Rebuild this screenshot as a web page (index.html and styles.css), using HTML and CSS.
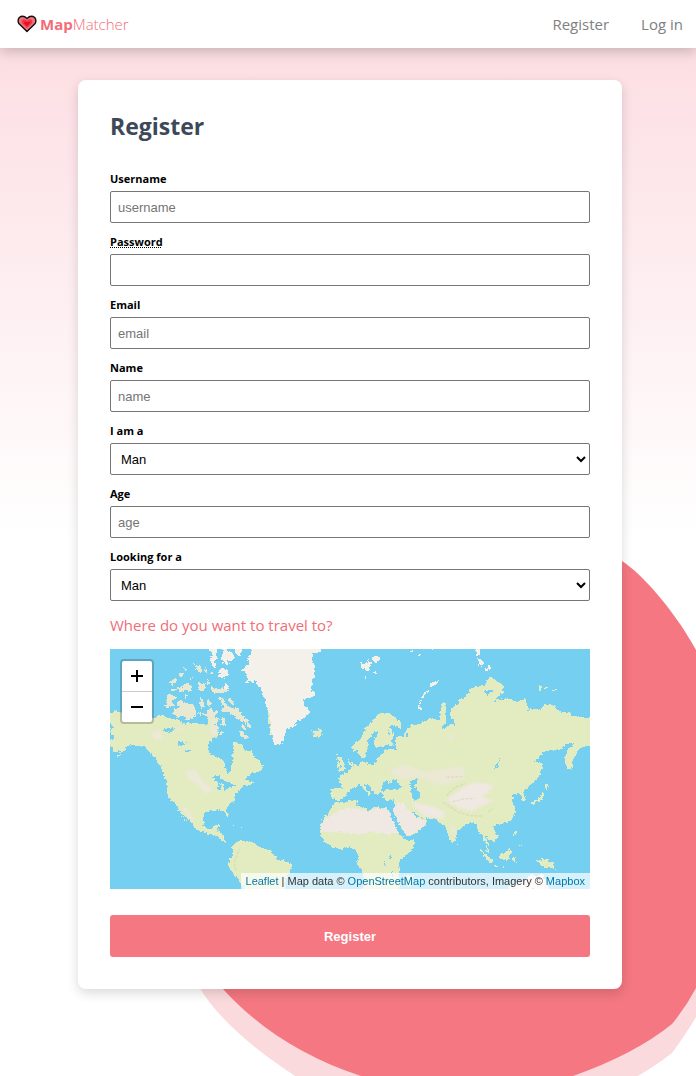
FILE: index.html
```html
<!DOCTYPE html>
<html lang="en">
<head>
<meta charset="utf-8">
<meta name="viewport" content="width=device-width, initial-scale=1">
<title>MapMatcher</title>
<link rel="stylesheet" href="styles.css">
</head>
<body>
<svg class="blob" viewBox="0 0 516 530" aria-hidden="true">
  <path class="blob-pale" d="M14 430C26 460 60 490 85 509Q100 520 115 530H458Q478 518 492 507Q506 488 516 471V200H14Z"/>
  <path class="blob-main" d="M442 15C463 29 487 58 504 84Q511 95 516 104V442Q506 461 492 478Q455 508 393 530H181C125 512 76 480 43 443L20 410V15Z"/>
</svg>
<header class="navbar">
  <a class="brand" href="#">
    <svg class="brand-heart" viewBox="0 0 20 18" aria-hidden="true">
      <path d="M10 16.5 1.8 8.5Q.2 5 2.3 2.5Q6 -.2 10 3.4Q14 -.2 17.7 2.5Q19.8 5 18.2 8.5Z" fill="#f0717b" stroke="#111" stroke-width="1.4" stroke-linejoin="round"/>
      <path d="M10 13.2 4.8 8Q4.3 4.8 6.5 4.2Q8.6 4 10 5.8Q11.4 4 13.5 4.2Q15.7 4.8 15.2 8Z" fill="#ed3745"/>
      <path d="M10 11.2 6.9 8Q7.6 5.8 10 7.2Q12.4 5.8 13.1 8Z" fill="#e80c20"/>
    </svg>
    <span class="brand-name"><b>Map</b>Matcher</span>
  </a>
  <nav class="nav-links">
    <a href="#">Register</a>
    <a href="#">Log in</a>
  </nav>
</header>
<main class="page">
  <form class="card">
    <h1 class="title">Register</h1>
    <div class="field"><label for="username">Username</label><input id="username" type="text" placeholder="username"></div>
    <div class="field"><label for="password"><abbr class="hint">Password</abbr></label><input id="password" type="password"></div>
    <div class="field"><label for="email">Email</label><input id="email" type="email" placeholder="email"></div>
    <div class="field"><label for="name">Name</label><input id="name" type="text" placeholder="name"></div>
    <div class="field"><label for="gender">I am a</label><select id="gender"><option>Man</option><option>Woman</option></select></div>
    <div class="field"><label for="age">Age</label><input id="age" type="text" placeholder="age"></div>
    <div class="field"><label for="looking">Looking for a</label><select id="looking"><option>Man</option><option>Woman</option></select></div>
    <p class="question">Where do you want to travel to?</p>
    <div class="map">
      <svg class="map-art" viewBox="0 0 1440 720" preserveAspectRatio="xMidYMid slice" aria-hidden="true">
        <defs>
          <filter id="coast" x="0" y="0" width="100%" height="100%" filterUnits="userSpaceOnUse">
            <feTurbulence type="fractalNoise" baseFrequency=".12" numOctaves="2" seed="4"/>
            <feDisplacementMap in="SourceGraphic" scale="14" xChannelSelector="R" yChannelSelector="G"/>
          </filter>
          <filter id="soft" x="-20%" y="-20%" width="140%" height="140%"><feGaussianBlur stdDeviation="5"/></filter>
          <clipPath id="eurasia-clip"><path d="M810 360L795 377L784 397L780 417L765 430L740 443L725 447L722 430L695 415L662 413L662 451L685 450L697 440L710 422L735 415L755 420L770 400L790 412L792 443L803 440L815 425L818 445L855 451L854 470L840 480L870 530L888 570L945 530L952 513L967 506L1005 540L1023 583L1035 575L1040 545L1088 522L1150 575L1220 500L1205 430L1244 432L1295 370L1275 340L1440 250V205L1000 140L700 230L720 340Z"/></clipPath>
        </defs>
        <g filter="url(#coast)" shape-rendering="crispEdges">
          <g class="land">
            <path d="M-6 197L15 187L32 190L60 205L128 212L140 200L158 197L180 208L213 213L216 226L240 221L290 227L300 207L306 225L325 245L322 263L297 280L295 300L302 316L325 325L342 335L346 355L352 375L361 369L364 350L370 340L366 315L374 300L368 282L385 281L400 292L404 306L425 304L430 320L442 330L460 352L452 367L425 371L415 383L404 392L435 399L420 407L399 408L390 426L373 436L374 452L358 466L349 478L355 500L350 501L344 486L325 484L287 488L280 505L282 530L290 540L307 538L315 529L326 528L324 545L340 556L342 575L348 584L337 578L328 566L309 558L283 551L255 540L247 525L218 494L205 477L198 464L182 453L173 436L170 397L158 374L155 357L134 325L115 305L99 290L80 291L60 286L42 304L17 330L35 304L10 310L8 294L-6 286L4 272L14 264L0 252L4 238L18 236L-6 222Z"/>
            <path d="M367 592L377 580L393 573L407 576L430 579L450 596L480 602L505 632L530 635L548 649L540 668L527 690L525 730H410L382 690L367 671L353 648L362 627L370 612Z"/>
            <path d="M474 190H482V225H474ZM480 229L484 226V257L480 257ZM604 244L615 246L627 239L638 243L637 256L625 266L608 262L611 254Z"/>
            <path d="M450 17L467 19L457 26ZM412 397L427 402L415 406ZM203 477L210 482L215 492L213 500ZM211 488L218 502L217 505L210 498ZM221 506L226 514L222 515ZM228 515L232 519L228 520Z"/>
            <path d="M728 308L727 292L738 279L756 262L766 240L786 216L800 199L817 193L838 193L855 205L873 220L872 238L850 231L833 230L845 245L852 257L846 274L850 285L841 293L834 284L820 294L797 295L792 279L797 267L807 253L795 245L782 262L772 278L776 296L768 312L766 328L753 326L742 304ZM855 277L874 288L853 285Z"/>
            <path d="M713 330L738 352L747 348L757 338L780 346L799 343L802 327L827 303L860 300L858 290L853 274L870 262L880 260L893 238L905 228L930 225L948 215L961 208L975 209L990 220L989 195L996 160L1007 160L1008 195L1008 235L1026 223L1035 229L1025 210L1017 185L1033 173L1048 165L1056 193L1048 175L1045 152L1067 144L1080 120L1126 107L1140 83L1160 97L1178 105L1179 130L1165 150L1202 149L1220 159L1244 149L1257 183L1269 178L1293 181L1303 164L1333 171L1345 187L1377 189L1385 201L1415 204L1425 208L1446 198V290L1430 292L1413 296L1405 305L1390 330L1387 360L1368 360L1365 327L1375 299L1395 280L1370 285L1350 303L1305 305L1276 338L1297 344L1293 375L1270 401L1239 428L1247 446L1244 460L1237 455L1235 438L1225 432L1205 441L1214 447L1206 454L1214 473L1217 490L1205 512L1183 522L1166 529L1148 530L1153 545L1163 560L1162 570L1149 577L1138 570L1123 561L1129 571L1137 582L1140 592L1130 588L1121 571L1119 559L1105 550L1101 530L1090 520L1068 527L1050 540L1038 554L1036 570L1030 583L1020 574L1011 545L1004 531L992 523L976 511L957 509L931 504L906 487L911 501L934 506L951 512L947 528L931 544L905 559L890 565L878 543L855 503L848 483L855 470L853 450L834 455L820 449L816 428L805 433L798 441L792 429L779 411L769 402L764 407L771 421L784 433L778 437L763 421L749 406L735 414L720 422L704 443L689 453L678 452L665 450L663 422L674 417L695 416L691 400L687 386L697 378L714 365L731 353L713 344Z"/>
            <path d="M681 338L692 342L689 360L680 354ZM682 315L688 315L684 326ZM679 326L691 324L702 340L708 358L700 367L682 365L694 355L688 337Z"/>
            <path d="M675 460L695 461L740 452L742 470L763 478L780 485L788 474L834 477L840 500L863 545L880 566L895 575L915 572L916 582L900 610L872 632L866 655L870 730H758L762 700L758 670L741 645L744 623L738 605L722 594L700 599L670 598L647 580L630 555L629 530L640 510L655 490Z"/>
            <path d="M1230 361L1248 358L1239 385L1220 404L1205 412L1222 387ZM1240 365L1250 386L1247 396L1238 370ZM1304 403L1318 413L1309 419L1304 412ZM1298 428L1303 438L1293 454L1281 458L1272 467L1261 465L1276 455L1289 445ZM1254 468L1258 477L1254 476ZM1215 542L1220 550L1213 558L1218 563L1212 561ZM1045 584L1045 594L1041 588ZM1216 558L1220 552L1213 563Z"/>
            <path d="M1109 599L1124 613L1137 625L1148 638L1146 643L1133 636L1118 614ZM1126 592L1139 603L1138 611L1129 607ZM1170 617L1185 610L1199 595L1203 612L1196 627L1190 635L1174 630L1166 624ZM1150 648L1185 653L1186 656L1152 652ZM1208 626L1219 623L1215 630L1217 639L1209 639ZM1230 585L1236 590L1233 596ZM1260 625L1279 635L1304 629L1329 643L1334 663L1316 653L1305 656L1292 648L1286 639Z"/>
            <path d="M1286 110L1298 112L1292 125L1287 123ZM1304 114L1317 116L1306 121ZM1326 121L1340 125L1330 126ZM1300 146L1307 148L1300 149ZM370 527L374 534L370 532ZM390 537L401 540L390 541ZM889 680L909 679L904 700L894 720Z"/>
          </g>
          <g class="arctic">
            <path d="M170 137L182 136L202 146L185 155L192 168L174 177L166 172Z"/>
            <path d="M204 154L232 160L253 171L260 188L255 203L235 211L218 203L198 207L190 191L193 180L213 174L200 164Z"/>
            <path d="M300 181L322 188L315 202L330 211L317 221L325 240L310 237L302 218L290 201L278 194L292 189Z"/>
            <path d="M327 147L341 151L355 174L383 178L394 193L410 210L425 232L418 238L400 220L380 208L360 190L330 190L342 175Z"/>
            <path d="M384 242L401 248L404 258L419 266L412 275L391 259ZM337 205L346 212L343 231L334 228ZM270 147L280 153L281 171L272 180ZM293 149L303 160L300 175L291 166ZM294 176L307 178L306 190L293 187ZM356 147L371 155L371 169L358 164Z"/>
            <path d="M178 101L196 85L202 92L188 107ZM206 74L222 73L213 87ZM182 119L204 118L190 130ZM205 118L218 111L235 101L245 113L244 128L226 122L210 132ZM223 55L232 61L219 69ZM249 41L272 53L277 69L266 70ZM285 53L292 64L287 72Z"/>
            <path d="M268 98L286 107L283 127L264 123ZM292 87L301 100L292 110ZM304 112L318 120L336 119L346 113L356 122L355 132L317 133L304 127ZM369 281L378 288L371 294ZM345 222L352 230L346 236ZM396 228L408 240L398 242ZM330 245L341 250L332 262ZM264 190L272 192L268 202ZM224 136L234 140L226 146ZM300 68L310 70L303 80ZM236 88L246 84L242 94Z"/>
          </g>
          <g class="ice">
            <path d="M425 -6H480V-6H634L632 9L610 14L604 40L614 49L616 86L603 88L608 105L604 118L613 138L604 146L583 149L578 170L589 171L599 191L586 206L562 216L551 235L528 238L523 263L512 290L495 288L484 260L480 195L470 175L465 153L456 135L452 113L434 97L405 102L415 88L403 67L395 65L418 39L412 25L422 20Z"/>
            <path d="M296 -6H326L317 12L324 30L310 36L320 55L307 53L299 31L305 20ZM340 -6L365 12L377 25L361 36L350 33L357 48L340 41L332 24L340 12ZM371 -6H401L388 22L376 12ZM338 57L353 65L357 76L335 90L324 82L332 73L323 60ZM346 102L356 116L343 123ZM751 41L770 42L773 32L785 43L779 60L768 72L765 60L754 58ZM785 24L810 20L812 31L799 42L785 35ZM790 63L802 75L796 78ZM764 80L772 84L767 92Z"/>
            <path d="M1097 -6H1111V17L1099 21ZM1100 26L1122 38L1120 50L1107 48ZM1126 58L1138 46L1146 60L1130 66ZM960 103L988 93L983 103L962 115ZM964 113L946 128L934 147L924 171L925 180L936 184L929 164L940 145L956 125ZM960 5L975 4L963 8ZM900 5L915 10L902 10ZM926 15L938 16L930 21ZM1225 700L1248 692L1260 679L1282 680L1296 676L1306 690L1318 720H1190Z"/>
          </g>
          <g class="dry-edge"><path d="M690 485L720 475L740 478L775 487L788 480L836 481L850 515L865 550L838 557L790 549L740 557L690 550L632 547L632 530L645 508Z"/><path d="M850 481L862 458L881 463L890 480L906 490L918 506L946 517L943 532L905 556L888 561L875 532L857 505Z"/></g>
          <g class="water">
            <path d="M166 239L180 235L195 241L188 249L173 250L163 244ZM205 280L232 278L219 285L201 291ZM225 303L247 305L225 310ZM305 386L322 377L330 386L342 395L360 400L371 405L375 412L358 415L343 427L343 407L335 399L330 423L323 425V399ZM820 396L832 394L842 405L850 390L863 390L861 401L873 411L867 421L839 419L816 426ZM900 400L919 390L923 399L912 410L922 423L931 430L928 451L910 453L904 434ZM836 618L845 617L848 627L837 633ZM822 630L831 652H826ZM846 660L850 683L844 678ZM1124 125L1149 124L1139 135L1128 138ZM1150 155L1177 133L1172 142L1158 157ZM1015 170L1021 185L1016 211L1030 209L1035 229L1020 223L1004 238L994 234L1008 223ZM1150 360L1169 333L1163 354ZM838 225L868 240L860 244ZM835 244L841 255L836 265ZM1143 360H1153L1150 364ZM888 250L897 256L890 263Z"/>
            <path d="M834 479L842 478L858 508L874 538L888 564L908 570L898 576L880 568L862 546Z"/>
          </g>
        </g>
        <g filter="url(#soft)" class="dry">
          <path d="M225 365L255 360L275 390L310 425L290 435L260 405L235 389ZM120 250L150 245L160 275L135 270ZM300 229L325 240L318 262L302 255ZM198 235L225 238L220 248L202 243ZM608 248L628 251L615 260ZM212 472L232 478L254 515L240 510Z" opacity=".75"/>
          <g clip-path="url(#eurasia-clip)"><path d="M1010 450L1060 415L1095 400L1155 408L1135 430L1115 445L1155 455L1120 468L1085 488L1050 478L1020 462ZM900 458L960 470L1005 488L1000 510L940 500Z"/><path d="M835 365L885 345L940 370L1060 350L1065 390L990 410L930 385L870 390ZM1020 525L1040 540L1027 570ZM1003 265L1035 255L1030 275Z" opacity=".6"/></g>
        </g>
        <g class="relief"><path d="M1000 460L1020 473L1045 490L1080 500L1119 501M1010 440L1035 415L1065 404M1028 458L1060 450L1095 448M378 665L372 640L380 620L390 600M1135 488L1150 479M1010 385L1060 383"/></g>
      </svg>
      <div class="zoom">
        <button type="button" aria-label="Zoom in"><svg viewBox="0 0 14 14"><path d="M7 1V13M1 7H13"/></svg></button>
        <button type="button" aria-label="Zoom out"><svg viewBox="0 0 14 14"><path d="M1 7H13"/></svg></button>
      </div>
      <div class="credit"><a href="#">Leaflet</a> | Map data © <a href="#">OpenStreetMap</a> contributors, Imagery © <a href="#">Mapbox</a></div>
    </div>
    <button class="submit" type="submit">Register</button>
  </form>
</main>
</body>
</html>
```
FILE: styles.css
```css
* {
  box-sizing: border-box;
}

body {
  position: relative;
  min-height: 100vh;
  margin: 0;
  overflow-x: hidden;
  background: linear-gradient(#fcdbe0, #fff 50%) no-repeat #fff;
  color: #000;
  font-family: "Segoe UI", "Open Sans", "Noto Sans", sans-serif;
}

a {
  text-decoration: none;
}

.blob {
  position: absolute;
  right: 0;
  bottom: 0;
  z-index: -1;
  width: 516px;
}

.blob-pale {
  fill: #fbdadd;
}

.blob-main {
  fill: #f47781;
}

.navbar {
  display: flex;
  align-items: center;
  justify-content: space-between;
  height: 48px;
  padding: 0 13px 0 17px;
  background: #fff;
  box-shadow: 0 4px 12px rgba(0, 0, 0, .2);
}

.brand {
  display: flex;
  align-items: center;
  gap: 3px;
  color: #f26d78;
  font-size: 15px;
  font-weight: 300;
}

.brand b {
  font-weight: 700;
}

.brand-heart {
  width: 20px;
  height: 18px;
}

.nav-links {
  display: flex;
  gap: 32px;
}

.nav-links a {
  color: #808080;
  font-size: 15px;
}

.page {
  display: flex;
  justify-content: center;
  padding: 32px 16px 32px 20px;
}

.card {
  display: flex;
  flex-direction: column;
  gap: 11px;
  width: 100%;
  max-width: 544px;
  padding: 32px;
  border-radius: 8px;
  background: #fff;
  box-shadow: 0 4px 12px rgba(0, 0, 0, .15);
}

.title {
  margin: 0 0 20px;
  color: #3d4858;
  font-size: 23px;
  line-height: 28px;
}

.field {
  display: flex;
  flex-direction: column;
  gap: 4px;
}

.field label {
  font-size: 11px;
  font-weight: 700;
  line-height: 16px;
}

.hint {
  text-decoration: underline dotted;
}

.field input,
.field select {
  width: 100%;
  height: 32px;
  padding: 0 7px;
  border: 1px solid #767676;
  border-radius: 2px;
  background: #fff;
  color: #000;
  font: 13px "Liberation Sans", Arial, sans-serif;
}

.field select {
  padding: 0 0 0 6px;
}

.field input::placeholder {
  color: #757575;
}

.question {
  margin: 0;
  color: #f26d78;
  font-size: 15px;
  line-height: 26px;
}

.map {
  position: relative;
  height: 240px;
  overflow: hidden;
  background: #75cff0;
}

.map-art {
  display: block;
  width: 100%;
  height: 100%;
}

.land {
  fill: #e3ebc0;
}

.arctic {
  fill: #e9e9d2;
}

.ice {
  fill: #f4f0ea;
}

.dry,
.dry-edge {
  fill: #f0e8e2;
}

.water {
  fill: #75cff0;
}

.relief {
  fill: none;
  stroke: #c9c9a8;
  stroke-width: 4;
  stroke-dasharray: 9 4;
  opacity: .4;
}

.zoom {
  position: absolute;
  top: 10px;
  left: 10px;
  display: flex;
  flex-direction: column;
  border: 2px solid rgba(0, 0, 0, .2);
  border-radius: 4px;
  background: #fff;
  background-clip: padding-box;
}

.zoom button {
  display: grid;
  place-items: center;
  width: 30px;
  height: 30px;
  padding: 0;
  border: 0;
  background: none;
}

.zoom button:first-child {
  height: 31px;
  border-bottom: 1px solid #ccc;
}

.zoom svg {
  width: 14px;
  height: 14px;
  stroke: #000;
  stroke-width: 2;
}

.credit {
  position: absolute;
  right: 0;
  bottom: 0;
  padding: 0 5px;
  background: rgba(255, 255, 255, .7);
  color: #333;
  font: 11px/16px "Liberation Sans", Arial, sans-serif;
  white-space: nowrap;
}

.credit a {
  color: #0078a8;
}

.submit {
  height: 42px;
  margin-top: 15px;
  border: 0;
  border-radius: 3px;
  background: #f47781;
  color: #fff;
  font: bold 13px "Liberation Sans", Arial, sans-serif;
}
```
